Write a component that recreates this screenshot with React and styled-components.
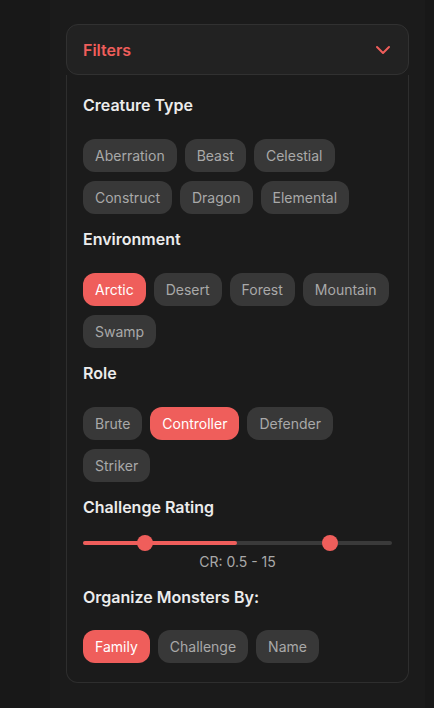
import React from "react";
import styled, { createGlobalStyle } from "styled-components";

const Global = createGlobalStyle`
  html, body { margin: 0; padding: 0; background: #181818; }
  body { font-family: Inter, "Noto Sans", sans-serif; -webkit-font-smoothing: antialiased; }
`;

const Page = styled.div`
  min-height: 708px;
  width: 375px;
  margin-left: 50px;
  background: #1b1b1b;
  padding: 24px 16px 0;
  box-sizing: border-box;
`;

const Panel = styled.div`
  display: flex;
  flex-direction: column;
`;

const Header = styled.div`
  height: 51px;
  box-sizing: border-box;
  display: flex;
  align-items: center;
  justify-content: space-between;
  padding: 0 13px 0 16px;
  background: #222222;
  border: 1px solid #313131;
  border-radius: 12px;
`;

const Title = styled.span`
  color: #ef5e5b;
  font-size: 16px;
  font-weight: 600;
`;

const Body = styled.div`
  border: 1px solid #2e2e2e;
  border-top: none;
  border-radius: 0 0 12px 12px;
  padding: 18px 16px 19px;
  display: flex;
  flex-direction: column;
  gap: 13px;
`;

const Section = styled.div`
  display: flex;
  flex-direction: column;
`;

const Heading = styled.div`
  color: #ececec;
  font-size: 16px;
  font-weight: 600;
  line-height: 24px;
  margin-bottom: ${(p) => p.$mb ?? 22}px;
`;

const Chips = styled.div`
  display: flex;
  flex-wrap: wrap;
  gap: 9px 8px;
`;

const Chip = styled.button`
  height: 33px;
  padding: 0 12px;
  border: none;
  border-radius: 12px;
  font-family: Inter, "Noto Sans", sans-serif;
  font-size: 14px;
  background: ${(p) => (p.$active ? "#ef5e5b" : "#383838")};
  color: ${(p) => (p.$active ? "#ffffff" : "#a9a9a9")};
  cursor: pointer;
`;

const SliderWrap = styled.div`
  position: relative;
  height: 16px;
  display: flex;
  align-items: center;
`;

const Track = styled.div`
  position: relative;
  width: 100%;
  height: 4px;
  border-radius: 2px;
  background: #3a3a3a;
`;

const Fill = styled.div`
  position: absolute;
  left: 0;
  top: 0;
  bottom: 0;
  border-radius: 2px;
  background: #ef5e5b;
`;

const Thumb = styled.div`
  position: absolute;
  top: 50%;
  width: 16px;
  height: 16px;
  border-radius: 50%;
  background: #ef5e5b;
  transform: translate(-50%, -50%);
`;

const CRLabel = styled.div`
  text-align: center;
  color: #a9a9a9;
  font-size: 14px;
  line-height: 20px;
  margin-top: 1px;
`;

const Chevron = () => (
  <svg width="24" height="24" viewBox="0 0 24 24" fill="none" stroke="#ef5e5b" strokeWidth="2" strokeLinecap="round" strokeLinejoin="round">
    <path d="m6 9 6 6 6-6" />
  </svg>
);

const groups = [
  { title: "Creature Type", items: ["Aberration", "Beast", "Celestial", "Construct", "Dragon", "Elemental"], active: null },
  { title: "Environment", items: ["Arctic", "Desert", "Forest", "Mountain", "Swamp"], active: "Arctic" },
  { title: "Role", items: ["Brute", "Controller", "Defender", "Striker"], active: "Controller" },
];

export default function App() {
  return (
    <>
      <Global />
      <Page>
        <Panel>
          <Header>
            <Title>Filters</Title>
            <Chevron />
          </Header>
          <Body>
            {groups.map((g) => (
              <Section key={g.title}>
                <Heading>{g.title}</Heading>
                <Chips>
                  {g.items.map((it) => (
                    <Chip key={it} $active={it === g.active}>{it}</Chip>
                  ))}
                </Chips>
              </Section>
            ))}
            <Section>
              <Heading $mb={16}>Challenge Rating</Heading>
              <SliderWrap>
                <Track>
                  <Fill style={{ width: "49.7%" }} />
                  <Thumb style={{ left: "20%" }} />
                  <Thumb style={{ left: "80%" }} />
                </Track>
              </SliderWrap>
              <CRLabel>CR: 0.5 - 15</CRLabel>
            </Section>
            <Section>
              <Heading $mb={21}>Organize Monsters By:</Heading>
              <Chips>
                <Chip $active>Family</Chip>
                <Chip>Challenge</Chip>
                <Chip>Name</Chip>
              </Chips>
            </Section>
          </Body>
        </Panel>
      </Page>
    </>
  );
}
